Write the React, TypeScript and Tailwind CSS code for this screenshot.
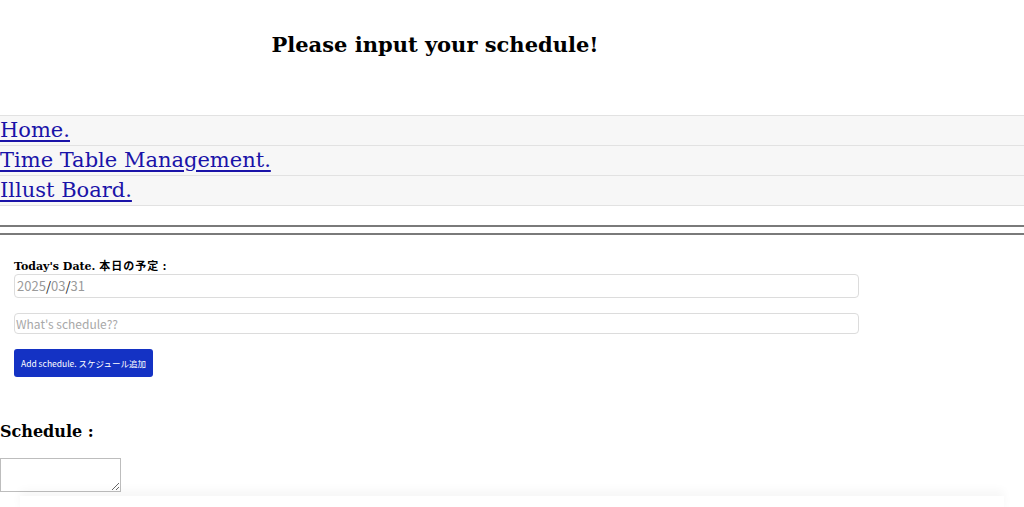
import { useState } from 'react'

const LINKS = ['Home.', 'Time Table Management.', 'Illust Board.']

export default function App() {
  const [schedule, setSchedule] = useState('')

  return (
    <div className="min-h-[507px] bg-white font-['DejaVu_Serif',serif] text-black">
      <header className="w-[870px] pt-[30px] pb-[55px] text-center">
        <h1 className="text-[21px] font-bold leading-[30px]">Please input your schedule!</h1>
      </header>

      <nav>
        <ul className="flex flex-col">
          {LINKS.map((label) => (
            <li key={label} className="-mt-px border-y border-[#e2e2e2] bg-[#f7f7f7] first:mt-0">
              <a href="#" className="block h-[29px] text-[21px] leading-[29px] text-[#1a13a8] underline underline-offset-[3px]">
                {label}
              </a>
            </li>
          ))}
        </ul>
      </nav>

      <div className="mt-[19px] flex flex-col gap-[6px]">
        <hr className="border-t-2 border-[#7a7a7a]" />
        <hr className="border-t-2 border-[#7a7a7a]" />
      </div>

      <section className="flex w-[859px] flex-col pl-[14px] pt-[24px]">
        <label className="text-[11px] font-bold leading-[12px]">
          Today's Date. <span className="font-['Noto_Sans_CJK_JP',sans-serif] tracking-[1px]">本日の予定 :</span>
        </label>
        <div className="mt-px flex h-[24px] items-center rounded-[4px] border border-[#dcdcdc] px-[2px] font-['Noto_Sans_CJK_JP',sans-serif] text-[13px] text-[#9a9a9a]">
          2025<span className="text-[#222]">/</span>03<span className="text-[#222]">/</span>31
        </div>
        <input
          type="text"
          placeholder="What's schedule??"
          className="mt-[15px] h-[21px] rounded-[4px] border border-[#dcdcdc] px-[1px] font-['Noto_Sans_CJK_JP',sans-serif] text-[12px] outline-none placeholder:text-[#a8a8a8]"
        />
        <button
          type="button"
          className="mt-[15px] h-[28px] w-[139px] rounded-[3px] bg-[#1432c4] font-['Noto_Sans_CJK_JP',sans-serif] text-[8.5px] text-white"
        >
          Add schedule. スケジュール追加
        </button>
      </section>

      <section className="pt-[44px]">
        <h2 className="text-[16px] font-bold leading-[22px]">Schedule :</h2>
        <textarea
          value={schedule}
          onChange={(e) => setSchedule(e.target.value)}
          className="mt-[15px] block h-[34px] w-[121px] border border-[#bdbdbd] outline-none"
        />
      </section>

      <div className="mx-[20px] mt-[4px] h-[20px] shadow-[0_-6px_10px_rgba(0,0,0,0.035)]" />
    </div>
  )
}
